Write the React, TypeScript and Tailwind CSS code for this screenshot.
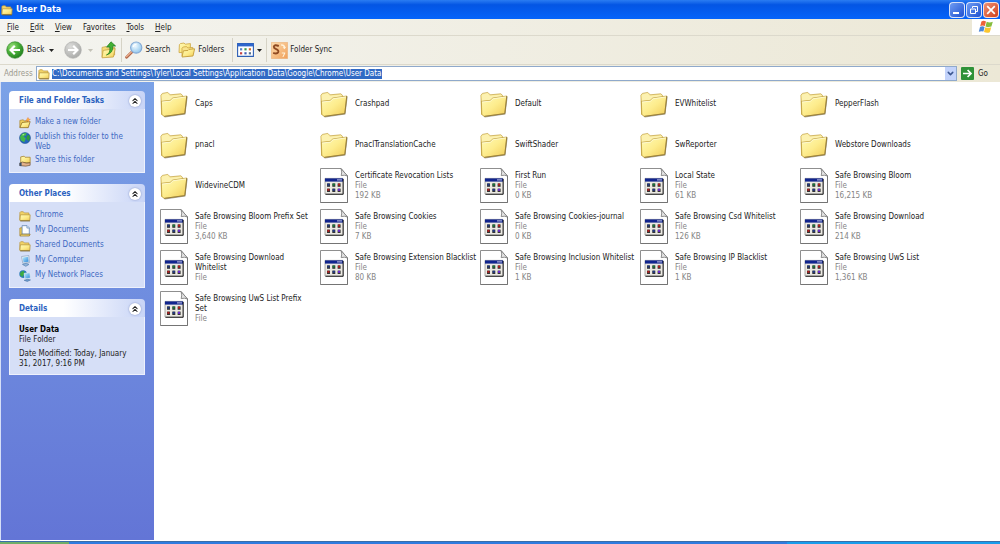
import React, { useState } from 'react';
import { ChevronDown, ChevronsUp } from 'lucide-react';

interface Entry {
  name: string;
  size?: string;
  folder?: boolean;
}

const ENTRIES: Entry[] = [
  { name: 'Caps', folder: true },
  { name: 'Crashpad', folder: true },
  { name: 'Default', folder: true },
  { name: 'EVWhitelist', folder: true },
  { name: 'PepperFlash', folder: true },
  { name: 'pnacl', folder: true },
  { name: 'PnaclTranslationCache', folder: true },
  { name: 'SwiftShader', folder: true },
  { name: 'SwReporter', folder: true },
  { name: 'Webstore Downloads', folder: true },
  { name: 'WidevineCDM', folder: true },
  { name: 'Certificate Revocation Lists', size: '192 KB' },
  { name: 'First Run', size: '0 KB' },
  { name: 'Local State', size: '61 KB' },
  { name: 'Safe Browsing Bloom', size: '16,215 KB' },
  { name: 'Safe Browsing Bloom Prefix Set', size: '3,640 KB' },
  { name: 'Safe Browsing Cookies', size: '7 KB' },
  { name: 'Safe Browsing Cookies-journal', size: '0 KB' },
  { name: 'Safe Browsing Csd Whitelist', size: '126 KB' },
  { name: 'Safe Browsing Download', size: '214 KB' },
  { name: 'Safe Browsing Download Whitelist' },
  { name: 'Safe Browsing Extension Blacklist', size: '80 KB' },
  { name: 'Safe Browsing Inclusion Whitelist', size: '1 KB' },
  { name: 'Safe Browsing IP Blacklist', size: '1 KB' },
  { name: 'Safe Browsing UwS List', size: '1,361 KB' },
  { name: 'Safe Browsing UwS List Prefix Set' },
];

const MENUS = [
  { before: '', key: 'F', after: 'ile' },
  { before: '', key: 'E', after: 'dit' },
  { before: '', key: 'V', after: 'iew' },
  { before: 'F', key: 'a', after: 'vorites' },
  { before: '', key: 'T', after: 'ools' },
  { before: '', key: 'H', after: 'elp' },
];

// Gradients shared by all the icons
const IconDefs = () => (
  <svg className="absolute size-0" aria-hidden="true">
    <defs>
      <linearGradient id="folderFront" x1="0" y1="0" x2="1" y2="1">
        <stop offset="0" stopColor="#fffbb8" />
        <stop offset="0.5" stopColor="#fdec8c" />
        <stop offset="1" stopColor="#f0cb58" />
      </linearGradient>
      <linearGradient id="folderBack" x1="0" y1="0" x2="0" y2="1">
        <stop offset="0" stopColor="#faeb9c" />
        <stop offset="1" stopColor="#e4bd50" />
      </linearGradient>
      <radialGradient id="green" cx="0.35" cy="0.3" r="0.75">
        <stop offset="0" stopColor="#9be07c" />
        <stop offset="0.5" stopColor="#4bb03a" />
        <stop offset="1" stopColor="#1f7d1c" />
      </radialGradient>
      <radialGradient id="gray" cx="0.35" cy="0.3" r="0.75">
        <stop offset="0" stopColor="#dcdcda" />
        <stop offset="1" stopColor="#a9aaa8" />
      </radialGradient>
      <radialGradient id="lens" cx="0.4" cy="0.35" r="0.7">
        <stop offset="0" stopColor="#f2fbff" />
        <stop offset="1" stopColor="#8cc4ec" />
      </radialGradient>
      <linearGradient id="screen" x1="0" y1="0" x2="1" y2="1">
        <stop offset="0" stopColor="#bdf0ff" />
        <stop offset="1" stopColor="#2b84d8" />
      </linearGradient>
      <linearGradient id="sync" x1="0" y1="0" x2="1" y2="1">
        <stop offset="0" stopColor="#fddcae" />
        <stop offset="1" stopColor="#f0a05a" />
      </linearGradient>
    </defs>
  </svg>
);

const BigFolder = () => (
  <svg viewBox="0 0 28 28" className="size-7 shrink-0" aria-hidden="true">
    <path d="M3.5 26.6 5 27.4 25.4 24.4 27.6 7.4 26.6 6.4 24.6 23.4Z" fill="#8d8d8d" opacity=".75" />
    <path d="M1.6 24.5.9 5.2 2.4 3.4 7.8 2.4 10.2 4.8 20.8 3.8 22.6 5.4V9L4 25Z" fill="url(#folderBack)" stroke="#c2a043" strokeWidth=".7" />
    <path d="M1.6 5.6 3 4.2 7.6 3.3 9.8 5.7 20.6 4.8 21.8 5.8V8L2 11Z" fill="#fcf1b0" />
    <path d="M1.4 11.4 10.2 10.4 12.8 8 26.8 6 24.8 23.6 4.2 26.4 1.8 24.4Z" fill="url(#folderFront)" stroke="#b5922f" strokeWidth=".7" />
    <path d="M2 12 10.5 11.1 13.1 8.7 26 6.9" fill="none" stroke="#fffde0" strokeWidth=".8" />
    <path d="M4.2 26.4 24.8 23.6 26.8 6" fill="none" stroke="#8b7336" strokeWidth=".8" />
  </svg>
);

const BigFile = () => {
  const dots = [
    ['#1e3a8a', '#15803d', '#b91c1c'],
    ['#b91c1c', '#1e3a8a', '#6d28d9'],
  ];
  return (
    <svg viewBox="0 0 28 35" className="w-7 shrink-0" aria-hidden="true">
      <path d="M.5.5H21L27.5 8V34.5H.5Z" fill="#fff" stroke="#8f8f8f" />
      <path d="M27.5 8V34.5H.5" fill="none" stroke="#747474" />
      <path d="M21 .5Q22.4 4 21.2 7.6 24.4 6.6 27.5 8Z" fill="#e4e4e4" stroke="#747474" strokeWidth=".8" />
      <path d="M5 10.4H23V26H5Z" fill="#ebe9e2" stroke="#8a8a8a" strokeWidth=".7" />
      <path d="M5 10.4H23V13.6H5Z" fill="#10248e" />
      <path d="M17 11.4H22V12.4H17Z" fill="#c9c9e8" />
      <path d="M23.2 11V26.3H5.5" fill="none" stroke="#111" strokeWidth=".9" />
      {dots.map((row, r) =>
        row.map((c, i) => (
          <g key={`${r}-${i}`}>
            <rect x={7 + i * 5.3} y={15.4 + r * 5.2} width="3" height="3.4" fill="#333" />
            <rect x={7.4 + i * 5.3} y={15.6 + r * 5.2} width="2" height="2" fill={c} />
          </g>
        ))
      )}
    </svg>
  );
};

const SmallFolder = () => (
  <svg viewBox="0 0 14 14" className="size-3 shrink-0" aria-hidden="true">
    <path d="M1 11.6V3L2 2H5L6.2 3.4H11.5V6Z" fill="#f2d368" stroke="#b8943a" strokeWidth=".8" />
    <path d="M1 12.2 1.6 5.6H13L12.6 12.2Z" fill="url(#folderFront)" stroke="#b8943a" strokeWidth=".9" />
    <path d="M1.5 12.8H12.8" stroke="#6d5a20" strokeWidth=".9" />
  </svg>
);

const NewFolder = () => (
  <svg viewBox="0 0 14 14" className="size-3 shrink-0" aria-hidden="true">
    <path d="M1 12V4L5 3.2 6 4.6 10 4.2V8Z" fill="#f0cf5e" stroke="#a8832a" strokeWidth=".8" />
    <path d="M1 12.4 3.6 6.4 13 5.4 10.8 12.4Z" fill="url(#folderFront)" stroke="#8d6b1c" strokeWidth=".9" />
    <path d="M10.5.5 11.3 2.3 13.3 2.8 11.6 3.8 11.4 5.8 10 4.2 8 4.6 9 2.8Z" fill="#ffb13d" stroke="#e0672a" strokeWidth=".4" />
  </svg>
);

const Globe = () => (
  <svg viewBox="0 0 14 14" className="size-3 shrink-0" aria-hidden="true">
    <circle cx="7" cy="7" r="6.4" fill="#2465bd" stroke="#174a86" strokeWidth=".6" />
    <path d="M3 2.5Q6 .5 9 1.5L8 4 5.5 5 8 7.5 6 12 2 9.5 1.2 5.4Z" fill="#43b649" />
    <path d="M9.5 4 12 3.6Q13.6 7 11.6 10.4L9.4 9 8.4 6.4Z" fill="#2f9c3c" />
    <path d="M3.5 3.5Q5 2 6.5 2.4L5 4Z" fill="#b6f0a4" />
  </svg>
);

const ShareFolder = () => (
  <svg viewBox="0 0 14 14" className="size-3 shrink-0" aria-hidden="true">
    <path d="M2 9V2.2L6 1.4 7 2.6H13V9Z" fill="url(#folderFront)" stroke="#a8832a" strokeWidth=".9" />
    <path d="M1 9.5 4 8.2 9 9.6 13 9V12L8 13 1 12.4Z" fill="#e2b28c" stroke="#5d4023" strokeWidth=".7" />
    <path d="M.6 9V12.8H3V9Z" fill="#38506e" />
  </svg>
);

const Documents = () => (
  <svg viewBox="0 0 14 14" className="size-3 shrink-0" aria-hidden="true">
    <path d="M1 12V3.5L4 3V12Z" fill="#f0cf5e" stroke="#a8832a" strokeWidth=".8" />
    <path d="M3.6.8H9.4L12 3.4V10.6H3.6Z" fill="#fdfeff" stroke="#5a7fae" strokeWidth=".9" />
    <path d="M9.2 1V3.6H12" fill="#cfe0f4" stroke="#5a7fae" strokeWidth=".7" />
    <path d="M1 12.8 2.4 10.8H13L12 12.8Z" fill="url(#folderFront)" stroke="#8d6b1c" strokeWidth=".8" />
  </svg>
);

const Computer = () => (
  <svg viewBox="0 0 14 14" className="size-3 shrink-0" aria-hidden="true">
    <path d="M3 1.8 11.4.6 12.2 8.8 4.4 9.6Z" fill="#eef3f8" stroke="#7d96b4" strokeWidth=".7" />
    <path d="M4.2 2.8 10.6 1.9 11.2 7.8 5.2 8.4Z" fill="url(#screen)" />
    <path d="M4 11 8.4 9.6 11.6 11 8 13.2Z" fill="#8fb4dc" stroke="#4f78a8" strokeWidth=".7" />
  </svg>
);

const Network = () => (
  <svg viewBox="0 0 14 14" className="size-3 shrink-0" aria-hidden="true">
    <circle cx="4.8" cy="4.8" r="4.4" fill="#2878b8" />
    <path d="M2 2.2 5.5 1 6.4 4 4 8.2 1 5.8Z" fill="#3cab42" />
    <path d="M6 4 12.6 3 13.4 9.4 7 10.4Z" fill="url(#screen)" stroke="#dfe9f2" strokeWidth=".9" />
    <path d="M6 12 10 10.8 13.4 11.6 9.6 13.4Z" fill="#6e9cd0" stroke="#3f6798" strokeWidth=".6" />
  </svg>
);

const NavArrow = ({ forward }: { forward?: boolean }) => (
  <svg viewBox="0 0 18 18" className="size-[18px] shrink-0" aria-hidden="true">
    <circle cx="9" cy="9" r="8.3" fill={forward ? 'url(#gray)' : 'url(#green)'} stroke={forward ? '#a9aaa8' : '#2f8527'} strokeWidth=".6" />
    <path
      d={forward ? 'M4 9H13M9.2 4.8 13.4 9 9.2 13.2' : 'M14 9H5M8.8 4.8 4.6 9 8.8 13.2'}
      fill="none"
      stroke="#fff"
      strokeWidth="2.2"
    />
  </svg>
);

const UpFolder = () => (
  <svg viewBox="0 0 16 18" className="w-4 shrink-0" aria-hidden="true">
    <path d="M1 16V6.4L5 5.6 6.4 7 13.6 6.2V14Z" fill="#f5dc78" stroke="#c4a042" strokeWidth=".7" />
    <path d="M1 16.8 2.2 9.4 14.2 7.6 12.4 16Z" fill="url(#folderFront)" stroke="#c4a042" strokeWidth=".8" />
    <path d="M5.4 14Q9.6 12.4 8.8 6H5.6L10 .8 14.6 5H11.8Q12.4 12 5.4 14Z" fill="#43b034" stroke="#1d7a1a" strokeWidth=".7" />
  </svg>
);

const Magnifier = () => (
  <svg viewBox="0 0 18 18" className="size-[18px] shrink-0" aria-hidden="true">
    <path d="M1.6 16.2 7.4 10.6" stroke="#b5694a" strokeWidth="2.8" strokeLinecap="round" />
    <path d="M1.6 15.6 7 10.4" stroke="#efb594" strokeWidth="1.2" strokeLinecap="round" />
    <circle cx="11.2" cy="6.6" r="5.6" fill="url(#lens)" stroke="#86abd6" strokeWidth="1.2" />
    <path d="M8 6Q8.8 3.4 11.6 3" fill="none" stroke="#fff" strokeWidth="1.2" />
  </svg>
);

const Folders = () => (
  <svg viewBox="0 0 18 16" className="w-[18px] shrink-0" aria-hidden="true">
    <path d="M1 10.6 1.4 2.6 2.4 1.6 6 1 7.2 2.2 12.4 1.6V10Z" fill="url(#folderFront)" stroke="#cba541" strokeWidth=".8" />
    <path d="M4 14V6.2L5.2 5 8.6 4.6 9.8 6 14.8 5.4V9Z" fill="#f9e48c" stroke="#cba541" strokeWidth=".8" />
    <path d="M4 15 5.4 8.8 10 8.4 11 7.4 16.6 6.8 15 14Z" fill="url(#folderFront)" stroke="#c49c38" strokeWidth=".9" />
  </svg>
);

const Views = () => (
  <svg viewBox="0 0 17 14" className="w-[17px] shrink-0" aria-hidden="true">
    <path d="M.6.6H16.4V13.4H.6Z" fill="#fff" stroke="#2d5fb4" strokeWidth="1.1" />
    <path d="M.6.6H16.4V3.4H.6Z" fill="#2f66cc" />
    <path d="M3 5.2H5.2V7.4H3Z" fill="#5680c8" />
    <path d="M7.4 5.2H9.6V7.4H7.4Z" fill="#3c9a4a" />
    <path d="M11.8 5.2H14V7.4H11.8Z" fill="#d4702c" />
    <path d="M3 9.2H5.2V11.4H3Z" fill="#c44343" />
    <path d="M7.4 9.2H9.6V11.4H7.4Z" fill="#3f5fb4" />
    <path d="M11.8 9.2H14V11.4H11.8Z" fill="#55708c" />
  </svg>
);

const FolderSync = () => (
  <svg viewBox="0 0 17 17" className="w-[17px] shrink-0" aria-hidden="true">
    <path d="M.4.4H16.6V16.6H.4Z" fill="url(#sync)" stroke="#e9ac74" strokeWidth=".6" />
    <path d="M7.8 4Q3.4 2.2 2.8 4.8 2.8 6.4 5.2 7.2 8 8.2 7.2 10.2 6 12.4 2.2 10.8" fill="none" stroke="#8f4a22" strokeWidth="1.9" />
    <path d="M10 2.4Q13.6 2 14.2 5L15.4 4.6 13.6 7.2 11.6 5.6 12.8 5.2Q12.4 3.6 10 3.6Z" fill="#fff3dc" />
    <path d="M10.8 10.6H14.2V11.6L12.4 15H11.4L13 11.6H10.8Z" fill="#fff3dc" />
  </svg>
);

const WindowsFlag = () => (
  <svg viewBox="0 0 16 14" className="w-4" aria-hidden="true">
    <path d="M3.4 1.4Q5.6.2 8 1.4L6.8 6Q4.4 5 2.2 6.2Z" fill="#ee6238" />
    <path d="M8.7 1.8Q11.6 3 14.8 1.8L13.4 6.6Q10.4 7.6 7.5 6.4Z" fill="#86bd3c" />
    <path d="M2 7Q4.3 5.8 6.6 6.9L5.4 11.6Q3 10.6.8 11.8Z" fill="#4a86d8" />
    <path d="M7.3 7.2Q10 8.4 13.2 7.3L11.8 12.2Q9 13.4 6 12Z" fill="#fbc62f" />
  </svg>
);

const Caret = () => (
  <svg viewBox="0 0 5 3" className="w-[5px] shrink-0" aria-hidden="true">
    <path d="M0 0H5L2.5 3Z" fill="currentColor" />
  </svg>
);

interface PanelProps {
  title: string;
  children: React.ReactNode;
}

const Panel: React.FC<PanelProps> = ({ title, children }) => {
  const [open, setOpen] = useState(true);

  return (
    <section>
      <h2 className="h-[18px] flex items-center justify-between rounded-t-sm bg-linear-to-r from-white from-40% to-[#c8d4f6] pt-0.5 pl-[10px] pr-1 font-bold text-[#2b62c0]">
        {title}
        <button
          onClick={() => setOpen(!open)}
          aria-label={`Toggle ${title}`}
          className="size-3 flex items-center justify-center rounded-full bg-white text-[#222] shadow-[0_0_2px_#7d8fc0]"
        >
          <ChevronsUp size={10} strokeWidth={2.5} />
        </button>
      </h2>
      {open && (
        <div className="border border-t-0 border-[#eef1fc] bg-[#d6dff7] px-[9px] pt-2 pb-[5px] leading-[10px]">
          {children}
        </div>
      )}
    </section>
  );
};

const TaskLink = ({ icon, children }: { icon: React.ReactNode; children: React.ReactNode }) => (
  <a href="#" className="flex items-start gap-1 text-[#3d69c2] hover:underline">
    {icon}
    <span>{children}</span>
  </a>
);

// Names wrap only on tiles that have no size line
const FileTile = ({ entry }: { entry: Entry }) => (
  <button className="h-[41px] flex items-center gap-[7px] text-left leading-[10px]">
    {entry.folder ? <BigFolder /> : <BigFile />}
    <span className="w-[118px] flex flex-col">
      <span className={entry.size ? 'whitespace-nowrap' : ''}>{entry.name}</span>
      {!entry.folder && <span className="text-[#858585]">File</span>}
      {entry.size && <span className="text-[#858585]">{entry.size}</span>}
    </span>
  </button>
);

export default function App() {
  const [path, setPath] = useState('C:\\Documents and Settings\\Tyler\\Local Settings\\Application Data\\Google\\Chrome\\User Data');

  return (
    <div className="h-screen flex flex-col overflow-hidden bg-linear-to-r from-[#f4f4f0] to-[#ece8d6] font-['DejaVu_Sans_Condensed','Noto_Sans',sans-serif] text-[8px] text-[#222]">
      <IconDefs />

      {/* Title bar */}
      <header className="h-[19px] shrink-0 flex items-center bg-linear-to-b from-[#2a7cf2] via-[#0455e4] via-25% to-[#0564fa] px-px">
        <SmallFolder />
        <h1 className="ml-[3px] flex-1 text-[9px] font-bold text-white">User Data</h1>
        <div className="flex gap-px">
          <button aria-label="Minimize" className="size-4 flex items-end rounded-sm border border-white/80 bg-linear-to-br from-[#6f9bf2] to-[#1f4fd0] p-[3px]">
            <span className="h-0.5 w-[6px] bg-white" />
          </button>
          <button aria-label="Restore" className="size-4 flex items-center justify-center rounded-sm border border-white/80 bg-linear-to-br from-[#6f9bf2] to-[#1f4fd0]">
            <svg viewBox="0 0 10 10" className="size-[10px]" fill="none" stroke="#fff">
              <path d="M3.5 3V1.5H8.5V6.5H7" />
              <path d="M1.5 4H6.5V8.5H1.5Z" />
            </svg>
          </button>
          <button aria-label="Close" className="size-4 flex items-center justify-center rounded-sm border border-white/80 bg-linear-to-br from-[#ee9072] to-[#cf3c14]">
            <svg viewBox="0 0 10 10" className="size-[10px]" stroke="#fff" strokeWidth="1.7">
              <path d="M1.2 1.2 8.8 8.8M8.8 1.2 1.2 8.8" />
            </svg>
          </button>
        </div>
      </header>

      {/* Menu bar */}
      <nav className="h-[17px] shrink-0 flex items-stretch border-b border-[#dcd9cc] pl-[7px]">
        <div className="flex flex-1 items-center gap-[11px] pt-px">
          {MENUS.map(menu => (
            <button key={menu.key}>
              {menu.before}
              <span className="underline">{menu.key}</span>
              {menu.after}
            </button>
          ))}
        </div>
        <div className="w-7 flex items-center justify-center bg-white">
          <WindowsFlag />
        </div>
      </nav>

      {/* Toolbar */}
      <div className="h-[29px] shrink-0 flex items-center border-b border-[#dcd9cc] pl-[6px]">
        <button className="flex items-center gap-[3px]">
          <NavArrow />
          Back
          <span className="ml-0.5"><Caret /></span>
        </button>
        <button aria-label="Forward" className="ml-[10px] flex items-center gap-1.5 text-[#c4c2b8]">
          <NavArrow forward />
          <Caret />
        </button>
        <button aria-label="Up" className="ml-2">
          <UpFolder />
        </button>
        <div className="ml-1 mr-[3px] h-6 w-px bg-[#d6d3c6]" />
        <button className="flex items-center gap-0.5">
          <Magnifier />
          Search
        </button>
        <button className="ml-2 flex items-center gap-0.5">
          <Folders />
          Folders
        </button>
        <div className="ml-2 mr-1 h-6 w-px bg-[#d6d3c6]" />
        <button aria-label="Views" className="flex items-center gap-[3px]">
          <Views />
          <Caret />
        </button>
        <div className="mx-1 h-6 w-px bg-[#d6d3c6]" />
        <button className="flex items-center gap-0.5">
          <FolderSync />
          Folder Sync
        </button>
      </div>

      {/* Address bar */}
      <div className="h-[17px] shrink-0 flex items-center pl-1 pr-3">
        <label htmlFor="address" className="w-8 text-[#9b998e]">Address</label>
        <div className="h-[15px] flex flex-1 items-center gap-0.5 border border-[#8fa9cb] bg-white pl-px">
          <SmallFolder />
          <input
            id="address"
            value={path}
            onChange={e => setPath(e.target.value)}
            className="h-[10px] field-sizing-content bg-[#316ac5] text-white outline-none"
          />
          <button aria-label="Show addresses" className="ml-auto h-[13px] w-[11px] flex items-center justify-center bg-[#c3d3fb] text-[#3b5690]">
            <ChevronDown size={9} strokeWidth={4} />
          </button>
        </div>
        <button className="ml-1 flex items-center gap-1">
          <svg viewBox="0 0 13 13" className="size-[13px]" aria-hidden="true">
            <rect width="13" height="13" rx="1" fill="#2f9238" />
            <path d="M2 6.5H10M6.6 3 10 6.5 6.6 10" fill="none" stroke="#fff" strokeWidth="1.7" />
          </svg>
          Go
        </button>
      </div>

      <div className="flex min-h-0 flex-1 border-l border-[#d6dff7] bg-white pb-px">
        {/* Task pane */}
        <aside className="w-[153px] shrink-0 flex flex-col gap-[11px] bg-linear-to-b from-[#7ba2e7] to-[#6375d6] pl-2 pr-[9px] pt-[9px]">
          <Panel title="File and Folder Tasks">
            <div className="flex flex-col gap-[3px]">
              <TaskLink icon={<NewFolder />}>Make a new folder</TaskLink>
              <TaskLink icon={<Globe />}>Publish this folder to the Web</TaskLink>
              <TaskLink icon={<ShareFolder />}>Share this folder</TaskLink>
            </div>
          </Panel>
          <Panel title="Other Places">
            <div className="flex flex-col gap-[3px]">
              <TaskLink icon={<SmallFolder />}>Chrome</TaskLink>
              <TaskLink icon={<Documents />}>My Documents</TaskLink>
              <TaskLink icon={<SmallFolder />}>Shared Documents</TaskLink>
              <TaskLink icon={<Computer />}>My Computer</TaskLink>
              <TaskLink icon={<Network />}>My Network Places</TaskLink>
            </div>
          </Panel>
          <Panel title="Details">
            <p className="font-bold text-black">User Data</p>
            <p>File Folder</p>
            <p className="mt-1">Date Modified: Today, January 31, 2017, 9:16 PM</p>
          </Panel>
        </aside>

        {/* File list */}
        <main className="grid flex-1 grid-cols-[repeat(auto-fill,160px)] content-start pl-[6px] pt-px">
          {ENTRIES.map(entry => (
            <FileTile key={entry.name} entry={entry} />
          ))}
        </main>
      </div>

      {/* Taskbar edge */}
      <footer className="h-[3px] shrink-0 flex border-t border-[#3a6ea8]">
        <div className="w-[69px] bg-[#6fae68]" />
        <div className="flex-1 bg-[#2f7be0]" />
        <div className="w-[213px] bg-[#189cec]" />
      </footer>
    </div>
  );
}
